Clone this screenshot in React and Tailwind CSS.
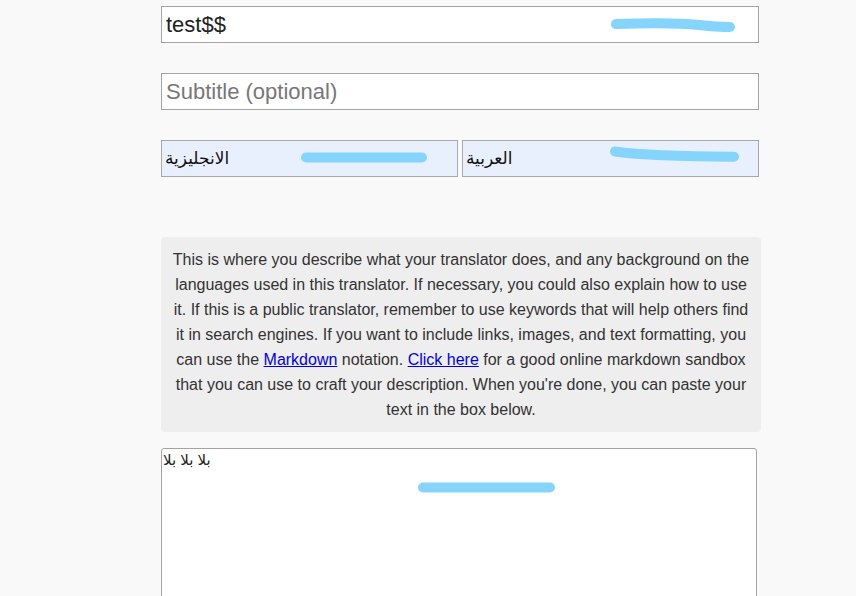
import React from 'react';

// Голубые «замазки» поверх полей
const Scribble = ({ className, d, width, height }) => (
  <svg
    className={`pointer-events-none absolute ${className}`}
    width={width}
    height={height}
    viewBox={`0 0 ${width} ${height}`}
    fill="none"
  >
    <path d={d} stroke="#85d4fc" strokeWidth="10" strokeLinecap="round" strokeLinejoin="round" />
  </svg>
);

const description = (
  <>
    This is where you describe what your translator does, and any background on the languages used in
    this translator. If necessary, you could also explain how to use it. If this is a public translator,
    remember to use keywords that will help others find it in search engines. If you want to include
    links, images, and text formatting, you can use the{' '}
    <a href="#" className="text-[#0000ee] underline">Markdown</a> notation.{' '}
    <a href="#" className="text-[#0000ee] underline">Click here</a> for a good online markdown sandbox
    that you can use to craft your description. When you're done, you can paste your text in the box
    below.
  </>
);

export default function App() {
  return (
    <div className="min-h-[596px] w-full overflow-hidden bg-[#f9f9f9] font-['Liberation_Sans','DejaVu_Sans',sans-serif]">
      <div className="ml-[161px] flex w-[600px] flex-col pt-[6px]">
        {/* Заголовок */}
        <div className="relative w-[598px]">
          <input
            readOnly
            defaultValue="test$$"
            className="h-[37px] w-full border border-[#a3a3a3] bg-white px-[4px] text-[22px] text-[#222] outline-none"
          />
          <Scribble className="left-[450px] top-[12px]" width={124} height={16} d="M5 6 C 40 5, 70 5, 88 7 S 108 9, 119 9" />
        </div>

        {/* Подзаголовок */}
        <input
          readOnly
          placeholder="Subtitle (optional)"
          className="mt-[30px] h-[37px] w-[598px] border border-[#a3a3a3] bg-white px-[4px] text-[22px] text-[#222] outline-none placeholder:text-[#777]"
        />

        {/* Языки */}
        <div className="mt-[30px] flex w-[598px] gap-[4px]">
          <div className="relative flex h-[37px] flex-1 items-center border border-[#a8a8a8] bg-[#e8f0fe] px-[3px] text-[17px] text-[#111]">
            <span dir="rtl">الانجليزية</span>
            <Scribble className="left-[139px] top-[10px]" width={126} height={14} d="M5 6.5 L 121 6.5" />
          </div>
          <div className="relative flex h-[37px] flex-1 items-center border border-[#a8a8a8] bg-[#e8f0fe] px-[3px] text-[17px] text-[#111]">
            <span dir="rtl">العربية</span>
            <Scribble className="left-[147px] top-[5px]" width={129} height={18} d="M5 5.5 C 30 9, 70 10.5, 124 10.7" />
          </div>
        </div>

        {/* Описание */}
        <div className="mt-[60px] rounded-[4px] bg-[#eeeeee] px-[11px] py-[10px] text-center text-[16px] leading-[25px] text-[#333]">
          {description}
        </div>

        {/* Текстовое поле */}
        <div className="relative mt-[16px] w-[596px]">
          <textarea
            readOnly
            defaultValue="بلا بلا بلا"
            className="block h-[160px] w-full resize-none rounded-[3px] border border-[#a3a3a3] bg-white px-[1px] py-[2px] text-[15px] leading-[18px] text-[#222] outline-none"
          />
          <Scribble className="left-[257px] top-[30px]" width={137} height={19} d="M5 9.5 L 132 9.5" />
        </div>
      </div>
    </div>
  );
}
